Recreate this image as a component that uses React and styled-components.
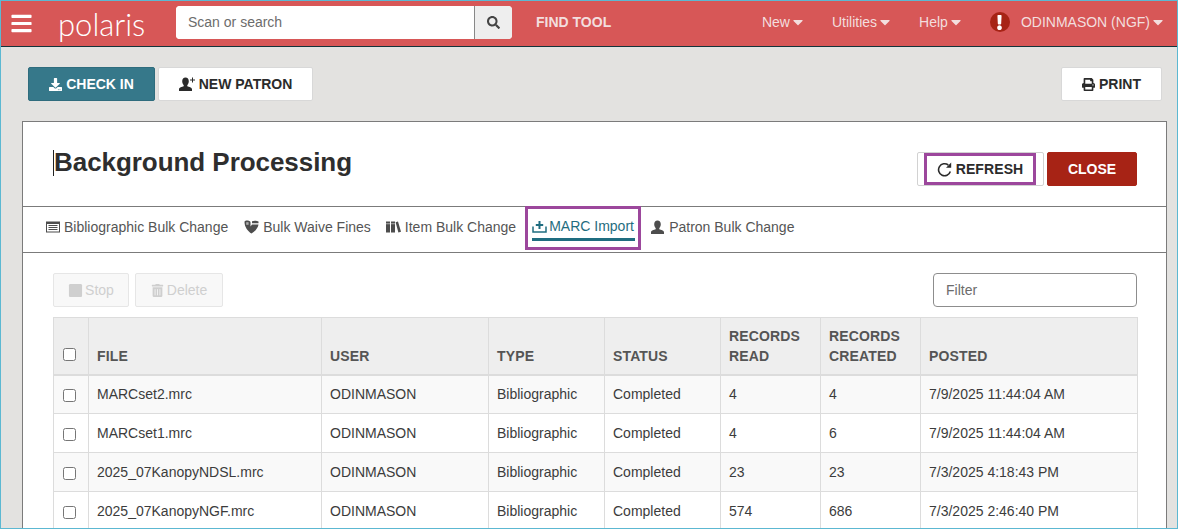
import React from 'react';
import styled, { createGlobalStyle } from 'styled-components';
import { FaBars, FaSearch, FaCaretDown, FaExclamation, FaDownload, FaPrint, FaStop, FaTrashAlt } from 'react-icons/fa';

const GlobalStyle = createGlobalStyle`
  html, body {
    margin: 0;
    padding: 0;
    overflow: hidden;
    font-family: "Liberation Sans", Arial, sans-serif;
  }
`;

const Frame = styled.div`
  box-sizing: border-box;
  width: 1178px;
  height: 529px;
  border: 1px solid #5cb8d2;
  background: #e3e2e0;
  overflow: hidden;
`;

const Nav = styled.header`
  box-sizing: border-box;
  height: 46px;
  display: flex;
  align-items: center;
  background: #d75757;
  border-bottom: 1px solid #12343b;
  color: #f3dede;
  font-size: 14px;
`;

const Burger = styled.span`
  display: flex;
  margin-left: 9px;
  font-size: 23px;
  color: #fff;
`;

const Logo = styled.span`
  margin-left: 25px;
  width: 118px;
  font-family: Lato, "Open Sans", sans-serif;
  font-weight: 300;
  font-size: 31px;
  line-height: 36px;
  color: #fff;
`;

const SearchGroup = styled.div`
  display: flex;
  width: 336px;
  height: 33px;
  margin-top: -3px;
  border-radius: 4px;
  overflow: hidden;
  background: #fff;
`;

const SearchInput = styled.input`
  flex: 1;
  min-width: 0;
  border: 0;
  border-right: 1px solid #888;
  padding: 0 12px;
  font: 14px "Liberation Sans", Arial, sans-serif;
  &::placeholder { color: #6c6c6c; opacity: 1; }
`;

const SearchButton = styled.span`
  width: 37px;
  display: flex;
  align-items: center;
  justify-content: center;
  background: #eee;
  color: #444;
  font-size: 13px;
`;

const FindTool = styled.span`
  margin-left: 24px;
  font-weight: 700;
  font-size: 14px;
  margin-top: -3px;
`;

const NavRight = styled.div`
  margin-left: auto;
  display: flex;
  align-items: center;
  padding-right: 14px;
  margin-top: -3px;
`;

const NavItem = styled.span`
  display: flex;
  align-items: center;
  margin-left: ${(p) => p.$gap || 29}px;
  svg { width: 10px; height: 16px; margin-left: 3px; }
`;

const Alert = styled.span`
  margin-left: 29px;
  width: 20px;
  height: 20px;
  border-radius: 50%;
  background: #a72315;
  color: #fff;
  display: flex;
  align-items: center;
  justify-content: center;
  font-size: 15px;
`;

const ActionBar = styled.div`
  display: flex;
  gap: 3px;
  padding: 20px 15px 0 27px;
`;

const Btn = styled.button`
  box-sizing: border-box;
  height: 34px;
  display: inline-flex;
  align-items: center;
  justify-content: center;
  gap: 4px;
  border-radius: 2px;
  border: 1px solid ${(p) => p.$border || '#d8d8d8'};
  background: ${(p) => p.$bg || '#fff'};
  color: ${(p) => p.$color || '#2b2b2b'};
  font: 700 14px "Liberation Sans", Arial, sans-serif;
  padding: 0;
  width: ${(p) => p.$w}px;
  margin-left: ${(p) => (p.$push ? 'auto' : 0)};
  svg { font-size: 13px; }
`;

const Panel = styled.section`
  box-sizing: border-box;
  margin: 20px 10px 0 21px;
  height: 420px;
  background: #fff;
  border: 1px solid #7b7b7b;
  border-bottom: 0;
`;

const TitleRow = styled.div`
  box-sizing: border-box;
  height: 84px;
  display: flex;
  align-items: flex-start;
  padding: 30px 29px 0 30px;
`;

const Title = styled.h1`
  margin: -2px 0 0;
  height: 26px;
  font-size: 26px;
  line-height: 24px;
  font-weight: 700;
  letter-spacing: -0.05px;
  color: #2e2e2e;
  border-left: 1px solid #222;
`;

const TitleActions = styled.div`
  margin-left: auto;
  display: flex;
  gap: 3px;
`;

const RefreshOuter = styled.div`
  box-sizing: border-box;
  width: 127px;
  height: 34px;
  border: 1px solid #d2d2d2;
  border-radius: 2px;
  padding-left: 6px;
`;

const RefreshInner = styled.button`
  box-sizing: border-box;
  width: 112px;
  height: 32px;
  display: flex;
  align-items: center;
  justify-content: center;
  gap: 4px;
  border: 3px solid #9c479c;
  background: #fff;
  padding: 0;
  color: #2b2b2b;
  font: 700 14px "Liberation Sans", Arial, sans-serif;
  letter-spacing: 0.1px;
`;

const Tabs = styled.nav`
  box-sizing: border-box;
  height: 47px;
  display: flex;
  padding-left: 23px;
  border-top: 1px solid #7b7b7b;
  border-bottom: 1px solid #7b7b7b;
  color: #555;
  font-size: 14px;
`;

const Tab = styled.a`
  display: flex;
  align-items: center;
  gap: ${(p) => p.$iconGap || 4}px;
  height: 40px;
  margin-right: ${(p) => p.$gap}px;
  color: ${(p) => (p.$active ? '#1f6d80' : '#555')};
`;

const ActiveBox = styled.div`
  box-sizing: border-box;
  height: 44px;
  width: 116px;
  margin: -1px 10px 0 0;
  border: 3px solid #9c479c;
  padding: 0 3px 0 4px;
  ${Tab} {
    box-sizing: content-box;
    height: 24px;
    margin: 0;
    padding-top: 5px;
    border-bottom: 3px solid #1f6d80;
  }
`;

const Content = styled.div`
  padding: 20px 29px 0 30px;
`;

const ToolRow = styled.div`
  display: flex;
  gap: 6px;
  height: 34px;
  margin-bottom: 10px;
`;

const GhostBtn = styled.span`
  box-sizing: border-box;
  width: ${(p) => p.$w}px;
  display: flex;
  align-items: center;
  justify-content: center;
  gap: ${(p) => p.$iconGap || 3}px;
  border: 1px solid #e6e6e6;
  border-radius: 2px;
  background: #f8f8f8;
  color: #cfcfcf;
  font-size: 14px;
  svg { font-size: ${(p) => p.$icon || 13}px; }
`;

const FilterInput = styled.input`
  box-sizing: border-box;
  margin-left: auto;
  width: 204px;
  border: 1px solid #8d8d8d;
  border-radius: 4px;
  padding: 0 12px;
  font: 14px "Liberation Sans", Arial, sans-serif;
  &::placeholder { color: #6c6c6c; opacity: 1; }
`;

const Table = styled.table`
  width: 1084px;
  table-layout: fixed;
  border-collapse: collapse;
  font-size: 14px;
  color: #3c3c3c;
`;

const Th = styled.th`
  box-sizing: border-box;
  height: 57px;
  padding: 6px 8px 8px;
  background: #eeeeee;
  border: 1px solid #dcdcdc;
  border-bottom: 2px solid #dcdcdc;
  vertical-align: bottom;
  text-align: left;
  color: #555;
  font-size: 14px;
  line-height: 20px;
  letter-spacing: 0.15px;
  font-weight: 700;
`;

const Td = styled.td`
  box-sizing: border-box;
  height: 39px;
  padding: 0 8px;
  border: 1px solid #dcdcdc;
  white-space: nowrap;
`;

const Row = styled.tr`
  background: ${(p) => (p.$odd ? '#f9f9f9' : '#fff')};
`;

const CheckCell = styled(Td)`
  padding: 0 4px 0 0;
  text-align: center;
`;

const CheckHead = styled(Th)`
  padding: 0 4px 10px 0;
  text-align: center;
`;

const Check = styled.span`
  display: inline-block;
  box-sizing: border-box;
  width: 13px;
  height: 13px;
  border: 1px solid #767676;
  border-radius: 2.5px;
  background: #fff;
  vertical-align: middle;
`;

const Col = styled.col`
  width: ${(p) => p.$w}px;
`;

// hand drawn, the icon packs have no close match for these
const ListIcon = () => (
  <svg width="14" height="12" viewBox="0 0 14 12">
    <path d="M0 0.5 h14 v11 h-14 z M1 3 v7.5 h12 v-7.5 z" fill="#4d4d4d" fillRule="evenodd" />
    <path d="M2.5 4.5 h9 M2.5 6.5 h9 M2.5 8.5 h9" stroke="#4d4d4d" />
  </svg>
);

const ShieldIcon = () => (
  <svg width="15" height="14" viewBox="0 0 15 14" fill="#4d4d4d">
    <path d="M0.5 2 C0.5 1 1.5 0.5 3 0.5 C4.5 0.5 6 1 6.5 2 L6.5 6.5 L8 4.5 L14.5 4.5 C14 8 11 11.5 7.5 13.5 C4 11.5 0.5 7 0.5 2 Z" />
    <path d="M8 1.2 C9.5 0.5 13 0.5 14.5 1.5 L14.5 3.2 L8 3.2 Z" />
    <path d="M2.2 2.2 h2.4 v2.6 h-2.4 z" fill="#fff" opacity="0.55" />
  </svg>
);

const BooksIcon = () => (
  <svg width="15" height="12" viewBox="0 0 15 12" fill="#4d4d4d">
    <path d="M0 0.5 h4 v11 h-4 z M5 0.5 h4 v11 h-4 z M9.6 1.2 l2.4 -0.7 l3 10.3 l-2.6 0.7 z" />
    <path d="M0 2.4 h9 v0.8 h-9 z" fill="#fff" opacity="0.7" />
  </svg>
);

const ImportIcon = () => (
  <svg width="15" height="14" viewBox="0 0 15 14" fill="none" stroke="#1f6d80">
    <path d="M1 7.5 v5.5 h13 v-5.5" strokeWidth="1.5" />
    <path d="M7.5 2 v8 M3.8 6 h7.4" strokeWidth="2" />
  </svg>
);

const RefreshIcon = () => (
  <svg width="15" height="15" viewBox="0 0 15 15" fill="none">
    <path d="M13.3 9.5 A6 6 0 1 1 11.3 3" stroke="#2b2b2b" strokeWidth="1.6" />
    <path d="M9 5.8 L14.2 5.8 L14.2 0.6 Z" fill="#2b2b2b" />
  </svg>
);

const BustIcon = ({ plus, color }) => (
  <svg width={plus ? 16 : 13} height="14" viewBox={plus ? '0 0 16 14' : '0 0 13 14'} fill={color}>
    <path d="M6.5 0.5 C8.6 0.5 9.8 2 9.8 4.2 C9.8 6 9 7.4 8.3 8 L8.3 9.2 C10 9.8 13 10.4 13 12.2 L13 14 L0 14 L0 12.2 C0 10.4 3 9.8 4.7 9.2 L4.7 8 C4 7.4 3.2 6 3.2 4.2 C3.2 2 4.4 0.5 6.5 0.5 Z" />
    {plus && <path d="M13 0.5 h1 v2 h2 v1 h-2 v2 h-1 v-2 h-2 v-1 h2 z" />}
  </svg>
);

const rows = [
  ['MARCset2.mrc', '4', '4', '7/9/2025 11:44:04 AM'],
  ['MARCset1.mrc', '4', '6', '7/9/2025 11:44:04 AM'],
  ['2025_07KanopyNDSL.mrc', '23', '23', '7/3/2025 4:18:43 PM'],
  ['2025_07KanopyNGF.mrc', '574', '686', '7/3/2025 2:46:40 PM'],
];

const App = () => {
  return (
    <Frame>
      <GlobalStyle />
      <Nav>
        <Burger><FaBars /></Burger>
        <Logo>polaris</Logo>
        <SearchGroup>
          <SearchInput placeholder="Scan or search" />
          <SearchButton><FaSearch /></SearchButton>
        </SearchGroup>
        <FindTool>FIND TOOL</FindTool>
        <NavRight>
          <NavItem>New<FaCaretDown /></NavItem>
          <NavItem>Utilities<FaCaretDown /></NavItem>
          <NavItem>Help<FaCaretDown /></NavItem>
          <Alert><FaExclamation /></Alert>
          <NavItem $gap={11}>ODINMASON (NGF)<FaCaretDown /></NavItem>
        </NavRight>
      </Nav>

      <ActionBar>
        <Btn $w={127} $bg="#36788a" $border="#2f6c7d" $color="#fff"><FaDownload />CHECK IN</Btn>
        <Btn $w={155}><BustIcon plus color="#2b2b2b" />NEW PATRON</Btn>
        <Btn $w={101} $push><FaPrint />PRINT</Btn>
      </ActionBar>

      <Panel>
        <TitleRow>
          <Title>Background Processing</Title>
          <TitleActions>
            <RefreshOuter>
              <RefreshInner><RefreshIcon />REFRESH</RefreshInner>
            </RefreshOuter>
            <Btn $w={90} $bg="#a72315" $border="#a72315" $color="#fff">CLOSE</Btn>
          </TitleActions>
        </TitleRow>

        <Tabs>
          <Tab $gap={16}><ListIcon />Bibliographic Bulk Change</Tab>
          <Tab $gap={15} $iconGap={4}><ShieldIcon />Bulk Waive Fines</Tab>
          <Tab $gap={9} $iconGap={4}><BooksIcon />Item Bulk Change</Tab>
          <ActiveBox>
            <Tab $active $iconGap={2}><ImportIcon />MARC Import</Tab>
          </ActiveBox>
          <Tab $gap={0} $iconGap={5}><BustIcon color="#4d4d4d" />Patron Bulk Change</Tab>
        </Tabs>

        <Content>
          <ToolRow>
            <GhostBtn $w={76} $icon={15} $iconGap={2}><FaStop />Stop</GhostBtn>
            <GhostBtn $w={88}><FaTrashAlt />Delete</GhostBtn>
            <FilterInput placeholder="Filter" />
          </ToolRow>
          <Table>
            <colgroup>
              <Col $w={35} />
              <Col $w={233} />
              <Col $w={167} />
              <Col $w={116} />
              <Col $w={116} />
              <Col $w={100} />
              <Col $w={100} />
              <Col $w={217} />
            </colgroup>
            <thead>
              <tr>
                <CheckHead><Check /></CheckHead>
                <Th>FILE</Th>
                <Th>USER</Th>
                <Th>TYPE</Th>
                <Th>STATUS</Th>
                <Th>RECORDS READ</Th>
                <Th>RECORDS CREATED</Th>
                <Th>POSTED</Th>
              </tr>
            </thead>
            <tbody>
              {rows.map((r, i) => (
                <Row key={r[0]} $odd={i % 2 === 0}>
                  <CheckCell><Check /></CheckCell>
                  <Td>{r[0]}</Td>
                  <Td>ODINMASON</Td>
                  <Td>Bibliographic</Td>
                  <Td>Completed</Td>
                  <Td>{r[1]}</Td>
                  <Td>{r[2]}</Td>
                  <Td>{r[3]}</Td>
                </Row>
              ))}
            </tbody>
          </Table>
        </Content>
      </Panel>
    </Frame>
  );
};

export default App;
